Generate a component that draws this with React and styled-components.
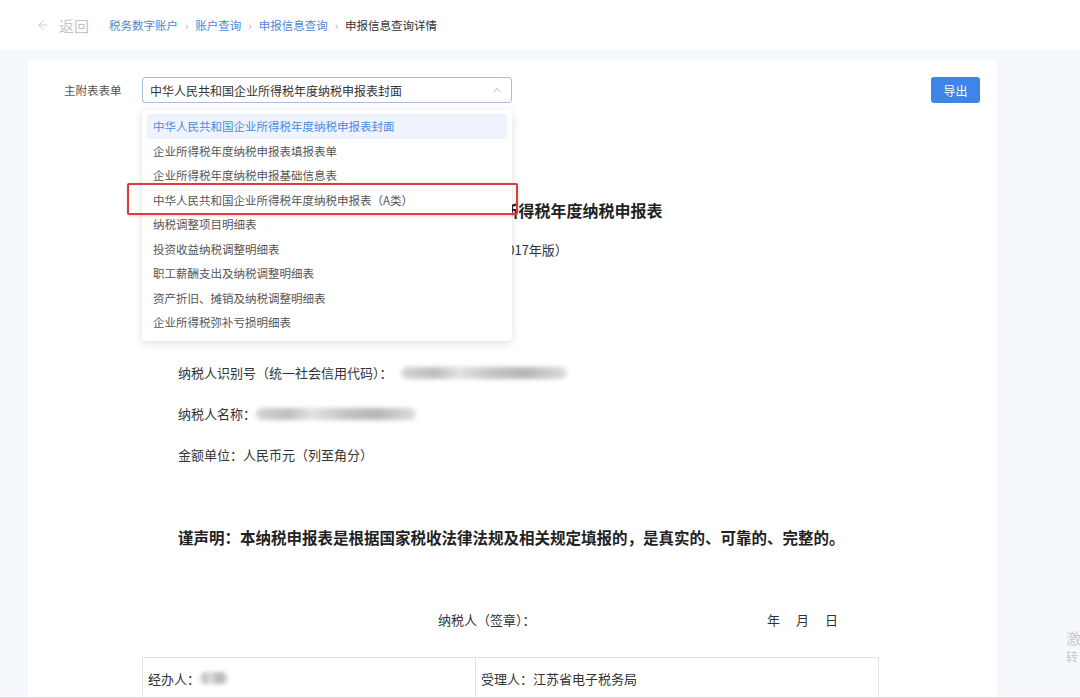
import React from "react";
import styled, { createGlobalStyle } from "styled-components";
import { ArrowLeft, ChevronUp } from "lucide-react";

const Global = createGlobalStyle`
  html, body { margin: 0; padding: 0; height: 698px; overflow: hidden; }
  body {
    background: #f5f8fc;
    font-family: "Noto Sans CJK SC", "Noto Sans", sans-serif;
    color: #333;
  }
  * { box-sizing: border-box; }
`;

const Page = styled.div`
  position: relative;
  width: 1080px;
  height: 698px;
  overflow: hidden;
  border-bottom: 1px solid #d8d8d8;
`;

const Header = styled.header`
  height: 50px;
  background: #fff;
  display: flex;
  align-items: center;
  padding-left: 36px;
  font-size: 11.5px;
`;

const Back = styled.div`
  display: flex;
  align-items: center;
  gap: 9px;
  color: #c4c4c4;
  font-size: 15px;
  margin-right: 20px;
`;

const Crumbs = styled.nav`
  display: flex;
  align-items: center;
  gap: 7px;
`;

const Crumb = styled.span`
  color: ${(p) => (p.$current ? "#333" : "#4f86d6")};
`;

const Sep = styled.span`
  color: #aaa;
  font-size: 11px;
`;

const Panel = styled.main`
  margin: 10px 0 0 28px;
  width: 969px;
  background: #fff;
  padding: 17px 17px 0 36px;
  min-height: 700px;
`;

const Toolbar = styled.div`
  display: flex;
  align-items: center;
  height: 26px;
`;

const Label = styled.span`
  width: 78px;
  font-size: 11.5px;
  color: #555;
`;

const SelectWrap = styled.div`
  position: relative;
  width: 370px;
`;

const SelectBox = styled.div`
  height: 26px;
  border: 1px solid #a7bedc;
  border-radius: 3px;
  display: flex;
  align-items: center;
  justify-content: space-between;
  padding: 0 8px 0 7px;
  font-size: 12px;
  color: #333;
`;

const Menu = styled.ul`
  position: absolute;
  z-index: 5;
  top: 33px;
  left: 0;
  width: 370px;
  margin: 0;
  padding: 4px 5px 6px;
  list-style: none;
  background: #fff;
  border-radius: 4px;
  box-shadow: 0 2px 10px rgba(0, 0, 0, 0.13);
`;

const Item = styled.li`
  height: 24.5px;
  display: flex;
  align-items: center;
  padding-left: 6px;
  font-size: 11.5px;
  border-radius: 3px;
  color: ${(p) => (p.$active ? "#4a8be3" : "#555")};
  background: ${(p) => (p.$active ? "#eef3fd" : "transparent")};
`;

const Highlight = styled.div`
  position: absolute;
  left: -15px;
  top: 73px;
  width: 391px;
  height: 32px;
  border: 2px solid #e0393e;
  border-radius: 2px;
  box-shadow: 0 1px 3px rgba(224, 57, 62, 0.25);
  pointer-events: none;
`;

const ExportButton = styled.button`
  margin-left: auto;
  width: 49px;
  height: 26px;
  border: 0;
  border-radius: 3px;
  background: #3d86e8;
  color: #fff;
  font-family: inherit;
  font-size: 12px;
`;

const Doc = styled.section`
  width: 737px;
  margin: 95px 0 0 78px;
`;

const Title = styled.h1`
  margin: 0;
  text-align: center;
  font-size: 16px;
  line-height: 24px;
  font-weight: 700;
  color: #222;
`;

const SubTitle = styled.div`
  margin-top: 18px;
  text-align: center;
  font-size: 13px;
  line-height: 20px;
  color: #333;
`;

const InfoList = styled.div`
  margin-top: 103px;
  padding-left: 36px;
  display: flex;
  flex-direction: column;
  gap: 21px;
`;

const InfoLine = styled.div`
  display: flex;
  align-items: center;
  font-size: 13px;
  line-height: 20px;
  color: #333;
`;

const Blur = styled.span`
  display: inline-block;
  margin-left: ${(p) => p.$gap || 0}px;
  width: ${(p) => p.$w}px;
  height: 12px;
  border-radius: 6px;
  background: linear-gradient(
    90deg,
    #d6d6d6 0%,
    #bdbdbd 20%,
    #e2e2e2 35%,
    #c4c4c4 55%,
    #b5b5b5 75%,
    #dedede 100%
  );
  filter: blur(2px);
`;

const Declaration = styled.p`
  margin: 60px 0 0;
  padding-left: 36px;
  font-size: 15.5px;
  line-height: 24px;
  font-weight: 700;
  color: #222;
  white-space: nowrap;
`;

const SignRow = styled.div`
  margin-top: 61px;
  display: flex;
  justify-content: space-between;
  padding: 0 41px 0 296px;
  font-size: 13px;
  line-height: 20px;
  color: #333;
`;

const DateParts = styled.span`
  display: flex;
  gap: 16px;
`;

const Table = styled.div`
  margin-top: 27px;
  display: grid;
  grid-template-columns: 333px 1fr;
  border-top: 1px solid #e3e3e3;
  border-left: 1px solid #e3e3e3;
`;

const Cell = styled.div`
  height: 41px;
  display: flex;
  align-items: center;
  padding-left: 5px;
  border-right: 1px solid #e3e3e3;
  border-bottom: 1px solid #e3e3e3;
  font-size: 13px;
  color: #333;
`;

const Watermark = styled.div`
  position: absolute;
  left: 1066px;
  top: 630px;
  display: flex;
  flex-direction: column;
  gap: 6px;
  color: #c8c8c8;
  line-height: 1;
  span:first-child { font-size: 15px; }
  span:last-child { font-size: 12px; }
`;

const options = [
  "中华人民共和国企业所得税年度纳税申报表封面",
  "企业所得税年度纳税申报表填报表单",
  "企业所得税年度纳税申报基础信息表",
  "中华人民共和国企业所得税年度纳税申报表（A类）",
  "纳税调整项目明细表",
  "投资收益纳税调整明细表",
  "职工薪酬支出及纳税调整明细表",
  "资产折旧、摊销及纳税调整明细表",
  "企业所得税弥补亏损明细表",
];

export default function App() {
  return (
    <Page>
      <Global />
      <Header>
        <Back>
          <ArrowLeft size={14} strokeWidth={1.5} />
          <span>返回</span>
        </Back>
        <Crumbs>
          <Crumb>税务数字账户</Crumb>
          <Sep>›</Sep>
          <Crumb>账户查询</Crumb>
          <Sep>›</Sep>
          <Crumb>申报信息查询</Crumb>
          <Sep>›</Sep>
          <Crumb $current>申报信息查询详情</Crumb>
        </Crumbs>
      </Header>
      <Panel>
        <Toolbar>
          <Label>主附表表单</Label>
          <SelectWrap>
            <SelectBox>
              <span>中华人民共和国企业所得税年度纳税申报表封面</span>
              <ChevronUp size={12} color="#aaa" />
            </SelectBox>
            <Menu>
              {options.map((o, i) => (
                <Item key={o} $active={i === 0}>
                  {o}
                </Item>
              ))}
              <Highlight />
            </Menu>
          </SelectWrap>
          <ExportButton>导出</ExportButton>
        </Toolbar>
        <Doc>
          <Title>中华人民共和国企业所得税年度纳税申报表</Title>
          <SubTitle>（A类，2017年版）</SubTitle>
          <InfoList>
            <InfoLine>
              纳税人识别号（统一社会信用代码）：<Blur $gap={8} $w={166} />
            </InfoLine>
            <InfoLine>
              纳税人名称：<Blur $w={160} />
            </InfoLine>
            <InfoLine>金额单位：人民币元（列至角分）</InfoLine>
          </InfoList>
          <Declaration>
            谨声明：本纳税申报表是根据国家税收法律法规及相关规定填报的，是真实的、可靠的、完整的。
          </Declaration>
          <SignRow>
            <span>纳税人（签章）：</span>
            <DateParts>
              <span>年</span>
              <span>月</span>
              <span>日</span>
            </DateParts>
          </SignRow>
          <Table>
            <Cell>
              经办人：<Blur $w={28} />
            </Cell>
            <Cell>受理人：江苏省电子税务局</Cell>
          </Table>
        </Doc>
      </Panel>
      <Watermark>
        <span>激</span>
        <span>转</span>
      </Watermark>
    </Page>
  );
}
